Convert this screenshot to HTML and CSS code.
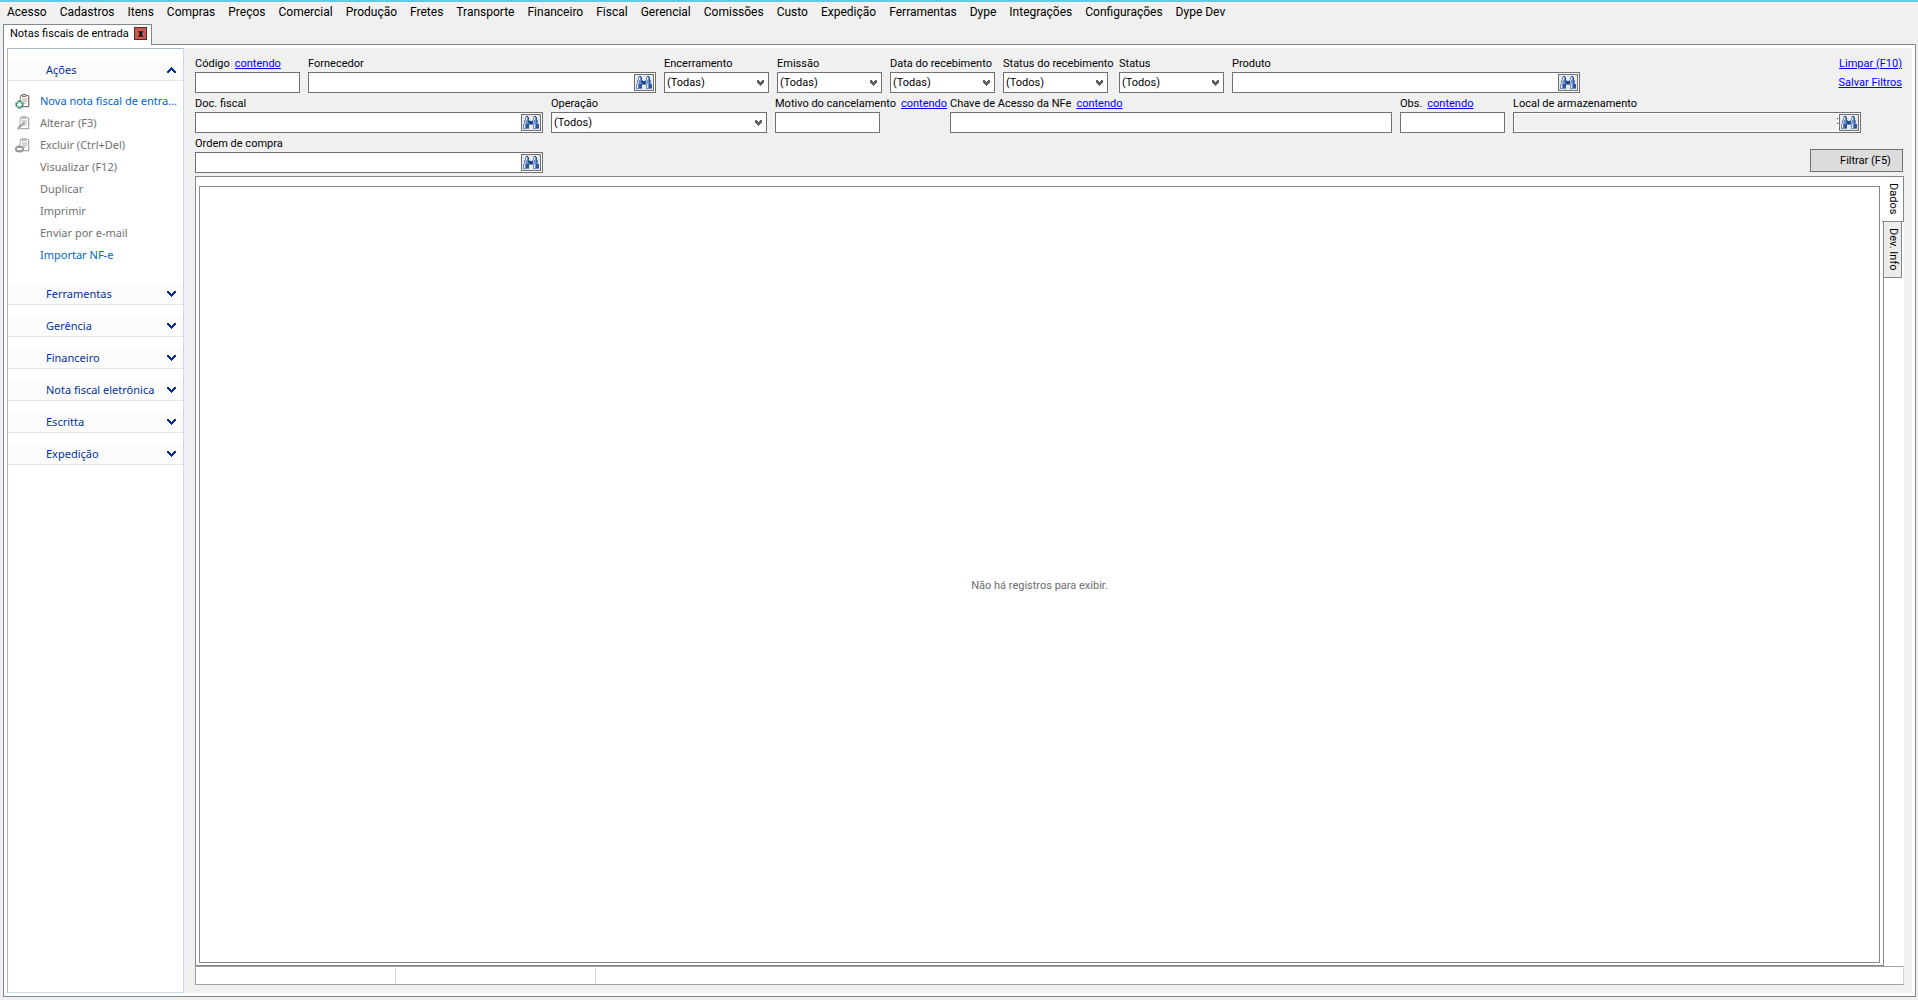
FILE: index.html
```html
<!DOCTYPE html>
<html lang="pt-BR">
<head>
  <meta charset="UTF-8">
  <meta name="viewport" content="width=device-width, initial-scale=1.0">
  <title>Notas fiscais de entrada</title>
  <link rel="stylesheet" href="styles.css">
</head>
<body>
  <svg class="sprite" aria-hidden="true">
    <symbol id="binoculars" viewBox="0 0 16 14">
      <path d="M3 0h2v1h1v3h1v1h2V4h1V1h1V0h2v1h1v3h1v4h1v5h-6V9H6v4H0V8h1V4h1V1h1z" fill="#6f8fc2"/>
      <path d="M3 0h2v1H3zM11 0h2v1h-2z" fill="#24488c"/>
      <path d="M3 1h1v3H3zM11 1h1v3h-1z" fill="#dbe6f6"/>
      <path d="M5 1h1v6H5zM13 1h1v6h-1z" fill="#2f569c"/>
      <path d="M2 4h1v4H2zM10 4h1v4h-1z" fill="#a9c0e4"/>
      <path d="M1 8h1v4H1zM11 8h1v4h-1z" fill="#dce7f6"/>
      <path d="M3 8h3v4H3zM13 8h3v4h-3z" fill="#2f569c"/>
      <path d="M6 5h4v3H6z" fill="#24488c"/>
    </symbol>
    <symbol id="clip" viewBox="0 0 16 16">
      <path d="M5.500 2.500h8v11h-9z" fill="#fff" stroke="currentColor"/>
      <path d="M7 1.500h4v2H7z" fill="#ddd" stroke="currentColor"/>
      <path d="M14 3v11H6" fill="none" stroke="currentColor" opacity=".6"/>
      <path d="M7 6h5M7 8h5M7 10h4" stroke="#a8a8a8"/>
    </symbol>
    <symbol id="down" viewBox="0 0 9 6">
      <path d="M0 0h2v1h1v1h1v1h1V2h1V1h1V0h2v2H8v1H7v1H6v1H5v1H4V5H3V4H2V3H1V2H0z" fill="currentColor"/>
    </symbol>
  </svg>

  <nav class="menu">
    <a href="#">Acesso</a>
    <a href="#">Cadastros</a>
    <a href="#">Itens</a>
    <a href="#">Compras</a>
    <a href="#">Preços</a>
    <a href="#">Comercial</a>
    <a href="#">Produção</a>
    <a href="#">Fretes</a>
    <a href="#">Transporte</a>
    <a href="#">Financeiro</a>
    <a href="#">Fiscal</a>
    <a href="#">Gerencial</a>
    <a href="#">Comissões</a>
    <a href="#">Custo</a>
    <a href="#">Expedição</a>
    <a href="#">Ferramentas</a>
    <a href="#">Dype</a>
    <a href="#">Integrações</a>
    <a href="#">Configurações</a>
    <a href="#">Dype Dev</a>
  </nav>

  <div class="tabs">
    <div class="tab">
      <span>Notas fiscais de entrada</span>
      <button class="close" type="button" aria-label="Fechar">x</button>
    </div>
  </div>

  <div class="window">
    <aside class="sidebar">
      <button class="group" type="button"><span>Ações</span><svg class="arrow up"><use href="#down"/></svg></button>
      <ul class="actions">
        <li>
          <svg class="icon new" viewBox="0 0 16 16"><use href="#clip"/><path d="M4.500 7.500v8M.5 11.500h8" stroke="#2f9468" stroke-width="4"/><path d="M4.500 9v5M2 11.500h5" stroke="#fff" stroke-width="2"/></svg>
          <button type="button">Nova nota fiscal de entra...</button>
        </li>
        <li>
          <svg class="icon" viewBox="0 0 16 16"><use href="#clip"/><path d="M2 15l1-3 6-5 1 1-6 6z" fill="#999"/></svg>
          <button type="button" disabled>Alterar (F3)</button>
        </li>
        <li>
          <svg class="icon" viewBox="0 0 16 16"><use href="#clip"/><ellipse cx="4.500" cy="12" rx="4.500" ry="3.500" fill="#999"/><path d="M2 12h5" stroke="#fff" stroke-width="2"/></svg>
          <button type="button" disabled>Excluir (Ctrl+Del)</button>
        </li>
        <li><button type="button" disabled>Visualizar (F12)</button></li>
        <li><button type="button" disabled>Duplicar</button></li>
        <li><button type="button" disabled>Imprimir</button></li>
        <li><button type="button" disabled>Enviar por e-mail</button></li>
        <li><button type="button">Importar NF-e</button></li>
      </ul>
      <button class="group" type="button"><span>Ferramentas</span><svg class="arrow"><use href="#down"/></svg></button>
      <button class="group" type="button"><span>Gerência</span><svg class="arrow"><use href="#down"/></svg></button>
      <button class="group" type="button"><span>Financeiro</span><svg class="arrow"><use href="#down"/></svg></button>
      <button class="group" type="button"><span>Nota fiscal eletrônica</span><svg class="arrow"><use href="#down"/></svg></button>
      <button class="group" type="button"><span>Escritta</span><svg class="arrow"><use href="#down"/></svg></button>
      <button class="group" type="button"><span>Expedição</span><svg class="arrow"><use href="#down"/></svg></button>
    </aside>

    <main class="main">
      <form class="filters">
        <div class="row">
          <div class="field small">
            <div class="caption"><label for="codigo">Código</label><a href="#">contendo</a></div>
            <input id="codigo" type="text">
          </div>
          <div class="field wide">
            <div class="caption"><label for="fornecedor">Fornecedor</label></div>
            <div class="lookup"><input id="fornecedor" type="text"><button type="button" aria-label="Procurar"><svg><use href="#binoculars"/></svg></button></div>
          </div>
          <div class="field small">
            <div class="caption"><label for="encerramento">Encerramento</label></div>
            <select id="encerramento"><option>(Todas)</option></select>
          </div>
          <div class="field small">
            <div class="caption"><label for="emissao">Emissão</label></div>
            <select id="emissao"><option>(Todas)</option></select>
          </div>
          <div class="field small">
            <div class="caption"><label for="data">Data do recebimento</label></div>
            <select id="data"><option>(Todas)</option></select>
          </div>
          <div class="field small status-field">
            <div class="caption"><label for="status-rec">Status do recebimento</label></div>
            <select id="status-rec"><option>(Todos)</option></select>
          </div>
          <div class="field small">
            <div class="caption"><label for="status">Status</label></div>
            <select id="status"><option>(Todos)</option></select>
          </div>
          <div class="field wide">
            <div class="caption"><label for="produto">Produto</label></div>
            <div class="lookup"><input id="produto" type="text"><button type="button" aria-label="Procurar"><svg><use href="#binoculars"/></svg></button></div>
          </div>
          <div class="links">
            <a href="#">Limpar (F10)</a>
            <a href="#">Salvar Filtros</a>
          </div>
        </div>
        <div class="row">
          <div class="field wide">
            <div class="caption"><label for="doc">Doc. fiscal</label></div>
            <div class="lookup"><input id="doc" type="text"><button type="button" aria-label="Procurar"><svg><use href="#binoculars"/></svg></button></div>
          </div>
          <div class="field medium">
            <div class="caption"><label for="operacao">Operação</label></div>
            <select id="operacao"><option>(Todos)</option></select>
          </div>
          <div class="field small reason-field">
            <div class="caption"><label for="motivo">Motivo do cancelamento</label><a href="#">contendo</a></div>
            <input id="motivo" type="text">
          </div>
          <div class="field key">
            <div class="caption"><label for="chave">Chave de Acesso da NFe</label><a href="#">contendo</a></div>
            <input id="chave" type="text">
          </div>
          <div class="field small">
            <div class="caption"><label for="obs">Obs.</label><a href="#">contendo</a></div>
            <input id="obs" type="text">
          </div>
          <div class="field wide">
            <div class="caption"><label for="local">Local de armazenamento</label></div>
            <div class="lookup off"><input id="local" type="text" disabled><span>:</span><button type="button" aria-label="Procurar"><svg><use href="#binoculars"/></svg></button></div>
          </div>
        </div>
        <div class="row">
          <div class="field wide">
            <div class="caption"><label for="ordem">Ordem de compra</label></div>
            <div class="lookup"><input id="ordem" type="text"><button type="button" aria-label="Procurar"><svg><use href="#binoculars"/></svg></button></div>
          </div>
          <button class="submit" type="button">Filtrar (F5)</button>
        </div>
      </form>

      <section class="result">
        <div class="page">
          <div class="grid">Não há registros para exibir.</div>
        </div>
        <div class="side-tabs">
          <button class="side-tab active" type="button">Dados</button>
          <button class="side-tab" type="button">Dev. Info</button>
        </div>
      </section>

      <footer class="statusbar">
        <div></div>
        <div></div>
        <div></div>
      </footer>
    </main>
  </div>
</body>
</html>
```
FILE: styles.css
```css
* {
  box-sizing: border-box;
}
body {
  margin: 0;
  min-height: 100vh;
  display: flex;
  flex-direction: column;
  background: #f0f0f0;
  border-top: 2px solid #62c9e9;
  font: 11px/14px Tahoma, Roboto, sans-serif;
  color: #000;
}
button, input, select {
  font: inherit;
  color: inherit;
  margin: 0;
  padding: 0;
  border: 0;
  border-radius: 0;
  background: none;
}
a {
  color: #00f;
}
.sprite {
  display: none;
}

/* menu */
.menu {
  display: flex;
  gap: 13px;
  height: 22px;
  padding: 0 7px;
  font: 12px/20px "Segoe UI", Roboto, sans-serif;
}
.menu a {
  color: #000;
  text-decoration: none;
}

/* document tabs */
.tabs {
  display: flex;
  height: 20px;
  padding-left: 3px;
}
.tab {
  display: flex;
  width: 149px;
  height: 21px;
  padding: 2px 4px 0 6px;
  background: #fff;
  border: 1px solid #828790;
  border-bottom: 0;
  z-index: 1;
  justify-content: space-between;
  white-space: nowrap;
}
.close {
  flex: none;
  width: 13px;
  height: 13px;
  background: #c75b50;
  border: 1px solid #5a2a2a;
  font-weight: bold;
  font-size: 10px;
  line-height: 9px;
}

.window {
  flex: 1;
  display: flex;
  margin: 0 2px 3px 3px;
  padding: 3px;
  background: #fff;
  border: 1px solid #828790;
}

/* sidebar */
.sidebar {
  width: 177px;
  flex: none;
  padding-top: 10px;
  border: 1px solid #a9b9c5;
  border-right-color: #c9d9e5;
  border-bottom-color: #c9d9e5;
  font-family: "Segoe UI", "Noto Sans", sans-serif;
}
.group {
  display: flex;
  align-items: center;
  justify-content: space-between;
  width: 100%;
  height: 22px;
  margin-bottom: 10px;
  padding: 0 7px 0 38px;
  background: #fcfcfc;
  border-bottom: 1px solid #e5e5e5;
  color: #003399;
}
.arrow {
  width: 9px;
  height: 6px;
}
.arrow.up {
  transform: rotate(180deg);
}
.actions {
  list-style: none;
  margin: -1px 0 17px;
  padding: 0;
}
.actions li {
  display: flex;
  align-items: center;
  height: 22px;
  padding-left: 7px;
}
.actions button {
  margin-left: auto;
  width: 143px;
  text-align: left;
  white-space: nowrap;
  color: #0066cc;
}
.actions button:disabled {
  color: #707070;
}
.icon {
  width: 16px;
  height: 16px;
  color: #aaa;
}
.icon.new {
  color: #8a7765;
}

/* filters */
.main {
  flex: 1;
  min-width: 0;
  display: flex;
  flex-direction: column;
  padding: 8px 8px 8px 11px;
  background: #f0f0f0;
}
.filters {
  display: flex;
  flex-direction: column;
  gap: 3px;
  margin-bottom: 3px;
}
.row {
  display: flex;
  gap: 8px;
  height: 37px;
}
.field {
  display: flex;
  flex-direction: column;
}
.small {
  width: 105px;
}
.medium {
  width: 216px;
}
.wide {
  width: 348px;
}
.key {
  width: 442px;
}
.status-field {
  width: 108px;
}
.reason-field {
  width: 167px;
}
.caption {
  display: flex;
  gap: 5px;
  line-height: 16px;
  white-space: nowrap;
}
.field > input, .field > select, .lookup {
  height: 21px;
  background: #fff;
  border: 1px solid #707070;
}
.small > input, .small > select {
  width: 105px;
}
.field > select {
  appearance: none;
  padding: 0 2px;
  background: #fff url("data:image/svg+xml,%3Csvg xmlns='http://www.w3.org/2000/svg' width='7' height='6'%3E%3Cpath d='M0 0h2v1h1v1h1V1h1V0h2v3H6v1H5v1H4v1H3V5H2V4H1V3H0z' fill='%23606060'/%3E%3C/svg%3E") no-repeat right 4px center;
}
.lookup {
  display: flex;
  padding: 1px;
}
.lookup input {
  flex: 1;
  min-width: 0;
}
.lookup button {
  display: flex;
  width: 20px;
  height: 17px;
  padding: 1px;
  background: #e8e8e8;
  border: 1px solid #707070;
}
.lookup svg {
  width: 16px;
  height: 14px;
}
.off input {
  background: #f0f0f0;
}
.links {
  display: flex;
  flex-direction: column;
  gap: 3px;
  margin-left: auto;
  padding-right: 2px;
  line-height: 16px;
  text-align: right;
}
.submit {
  align-self: flex-end;
  width: 93px;
  height: 23px;
  margin: 0 1px 1px auto;
  padding-left: 18px;
  background: #ddd;
  border: 1px solid #707070;
}

/* result */
.result {
  flex: 1;
  display: flex;
  background: #fff;
}
.page {
  flex: 1;
  display: flex;
  padding: 9px 3px 2px;
  border: 1px solid #828790;
}
.grid {
  flex: 1;
  display: flex;
  align-items: center;
  justify-content: center;
  padding-top: 22px;
  border: 1px solid #828790;
  color: #6d6d6d;
}
.side-tabs {
  width: 20px;
}
.side-tab {
  display: block;
  width: 18px;
  height: 56px;
  background: #ececec;
  border: 1px solid #828790;
  border-width: 0 1px 1px 0;
  writing-mode: vertical-rl;
}
.side-tab.active {
  width: 22px;
  height: 46px;
  margin-left: -2px;
  background: #fff;
  border-top-width: 1px;
}

.statusbar {
  display: flex;
  height: 19px;
  background: #fff;
  border: 1px solid #a0a0a0;
  border-right-color: #d7d7d7;
}
.statusbar div {
  width: 200px;
  margin-top: 1px;
  border-right: 1px solid #d7d7d7;
}
.statusbar div:last-child {
  flex: 1;
  border: 0;
}
```
